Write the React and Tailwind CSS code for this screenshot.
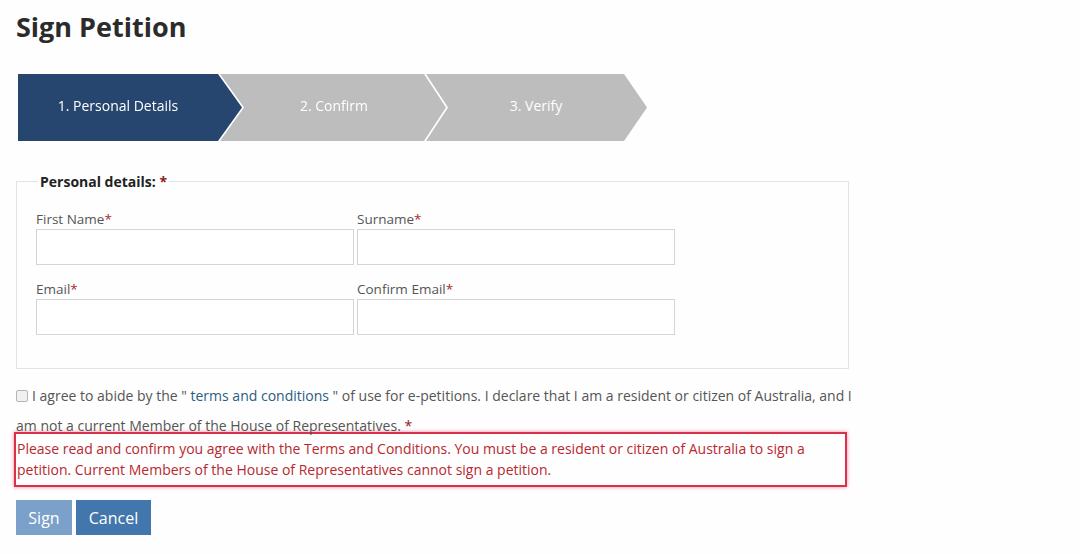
export default function App() {
  const font = { fontFamily: '"Open Sans", "Noto Sans", sans-serif' };
  return (
    <div className="w-[1080px] h-[554px] bg-[#fefefe] overflow-hidden text-[#555]" style={font}>
      <h1 className="pl-[16px] pt-[9px] text-[27px] leading-[36px] font-bold text-[#2b2b2b]">Sign Petition</h1>

      <div className="flex mt-[29px] ml-[18px] h-[67px]">
        <div className="relative z-30 drop-shadow-[2px_0_0_#ffffff]">
          <div className="w-[224px] h-[67px] bg-[#264670] [clip-path:polygon(0_0,200px_0,224px_33.5px,200px_67px,0_67px)] flex items-center pb-[5px]">
            <span className="w-[200px] text-center text-[14px] text-white">1. Personal Details</span>
          </div>
        </div>
        <div className="relative z-20 -ml-[22px] drop-shadow-[2px_0_0_#ffffff]">
          <div className="w-[226px] h-[67px] bg-[#bdbdbd] [clip-path:polygon(0_0,204px_0,226px_33.5px,204px_67px,0_67px)] flex items-center pb-[5px]">
            <span className="ml-[24px] w-[180px] text-center text-[14px] text-white">2. Confirm</span>
          </div>
        </div>
        <div className="relative z-10 -ml-[22px]">
          <div className="w-[223px] h-[67px] bg-[#bdbdbd] [clip-path:polygon(0_0,200px_0,223px_33.5px,200px_67px,0_67px)] flex items-center pb-[5px]">
            <span className="ml-[24px] w-[176px] text-center text-[14px] text-white">3. Verify</span>
          </div>
        </div>
      </div>

      <fieldset className="mt-[30px] ml-[16px] w-[833px] h-[198px] border border-[#e3e3e3] px-[19px] pb-0 pt-0">
        <legend className="ml-[2px] px-[2px] text-[14px] font-bold text-[#222]">
          Personal details: <span className="text-[#8b1a1a]">*</span>
        </legend>
        <div className="grid grid-cols-[318px_318px] gap-x-[3px] mt-[17px]">
          <div>
            <label className="block text-[13.5px] leading-[20px] text-[#555]">First Name<span className="text-[#a52a2a]">*</span></label>
            <div className="h-[36px] border border-[#d5d5d5] bg-white" />
          </div>
          <div>
            <label className="block text-[13.5px] leading-[20px] text-[#555]">Surname<span className="text-[#a52a2a]">*</span></label>
            <div className="h-[36px] border border-[#d5d5d5] bg-white" />
          </div>
          <div className="mt-[14px]">
            <label className="block text-[13.5px] leading-[20px] text-[#555]">Email<span className="text-[#a52a2a]">*</span></label>
            <div className="h-[36px] border border-[#d5d5d5] bg-white" />
          </div>
          <div className="mt-[14px]">
            <label className="block text-[13.5px] leading-[20px] text-[#555]">Confirm Email<span className="text-[#a52a2a]">*</span></label>
            <div className="h-[36px] border border-[#d5d5d5] bg-white" />
          </div>
        </div>
      </fieldset>

      <p className="mt-[12px] ml-[16px] w-[836px] text-[14px] leading-[30px] text-[#555]">
        <span className="inline-block align-[-1px] w-[12px] h-[12px] border border-[#b5b5b5] rounded-[2px] bg-[#f0f0f0] mr-[4px]" />
        I agree to abide by the " <span className="text-[#2a5d80]">terms and conditions</span> " of use for e-petitions. I declare that I am a resident or citizen of Australia, and I am not a current Member of the House of Representatives. <span className="text-[#8b1a1a]">*</span>
      </p>

      <div className="ml-[14px] mt-[-9px] w-[833px] h-[55px] border-2 border-[#d9304c] shadow-[0_0_4px_#f08a9a] px-[1px] pt-[4px] text-[14px] leading-[21px] text-[#b8282f]">
        Please read and confirm you agree with the Terms and Conditions. You must be a resident or citizen of Australia to sign a petition. Current Members of the House of Representatives cannot sign a petition.
      </div>

      <div className="flex gap-[4px] ml-[16px] mt-[13px]">
        <button className="w-[56px] h-[35px] bg-[#7ba0c9] text-white text-[16px]">Sign</button>
        <button className="w-[75px] h-[35px] bg-[#4376ac] text-white text-[16px]">Cancel</button>
      </div>
    </div>
  );
}
